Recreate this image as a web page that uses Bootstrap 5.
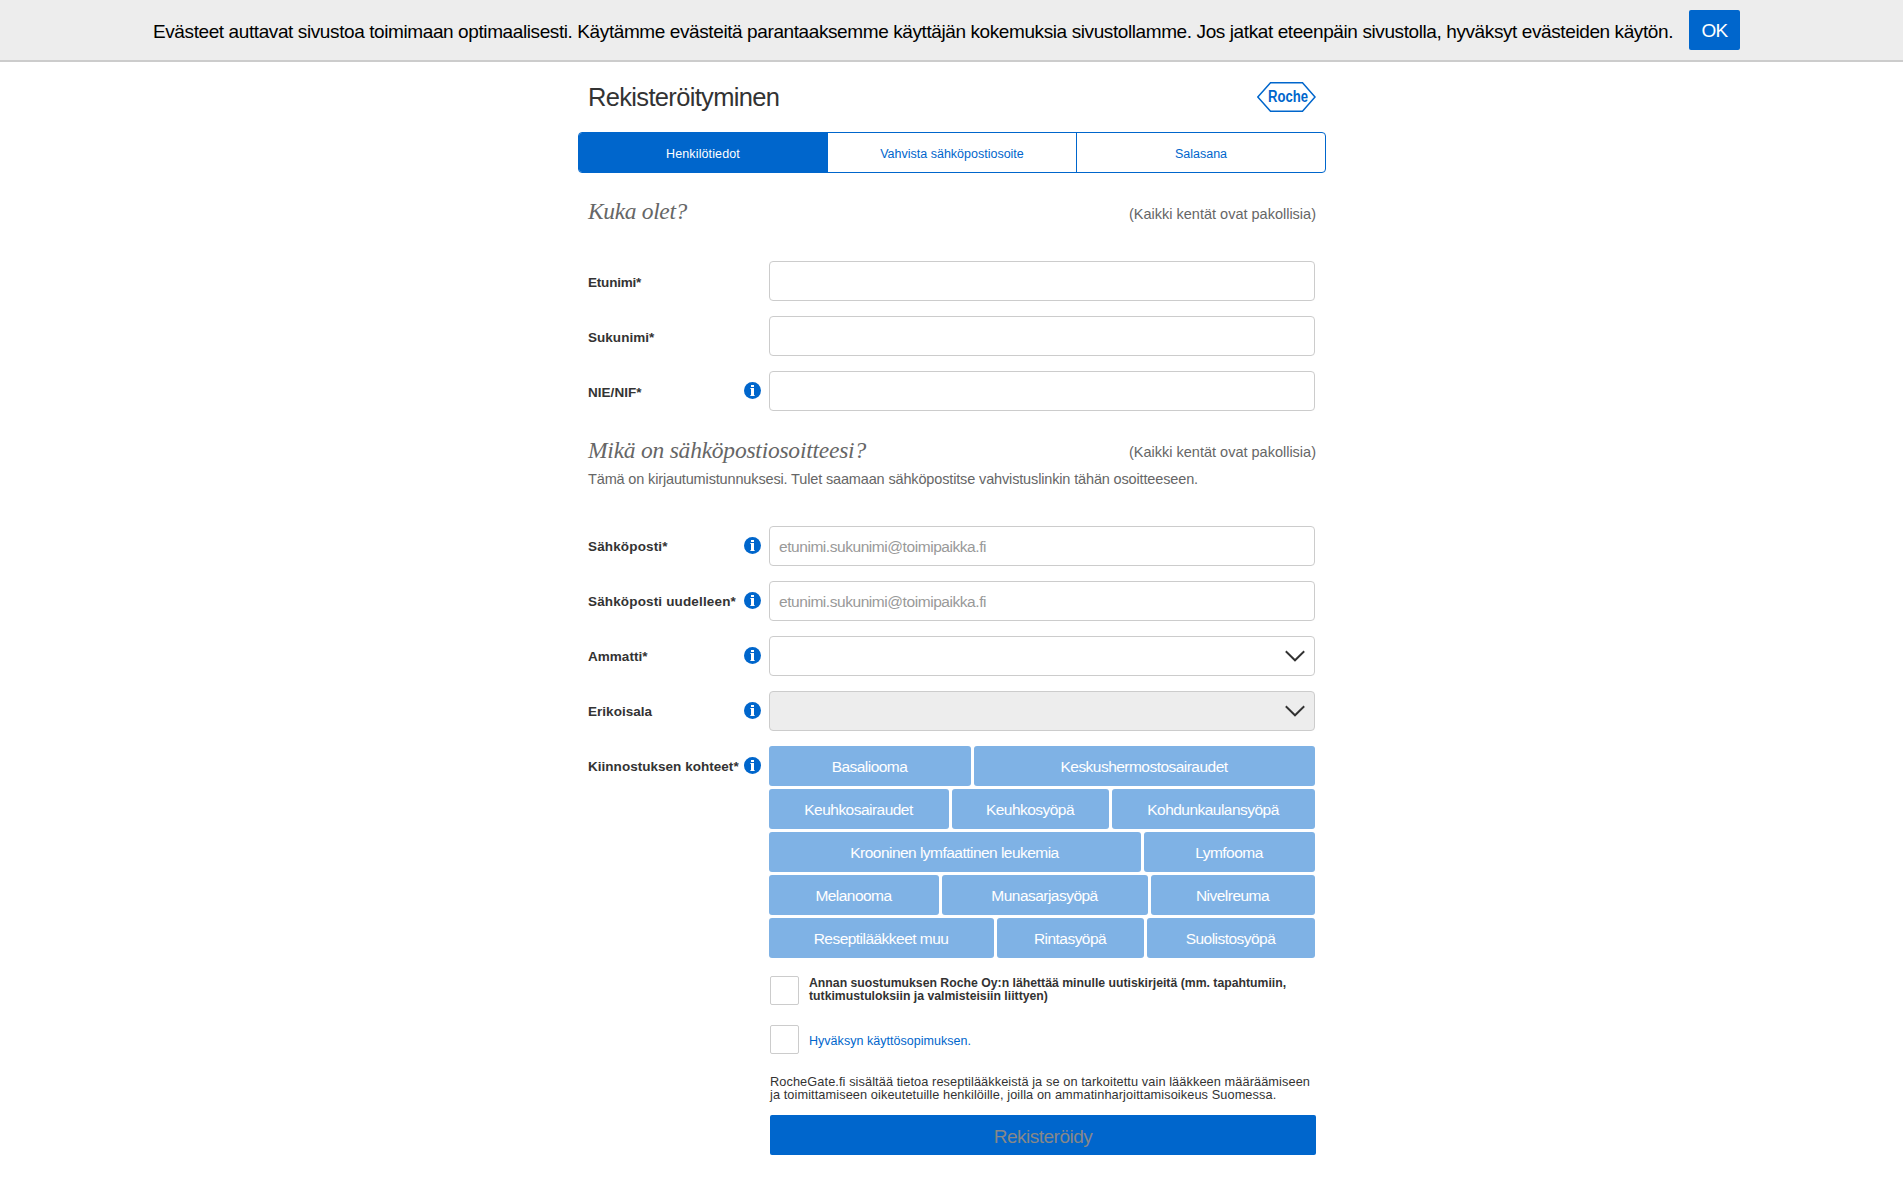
<!DOCTYPE html>
<html lang="fi">
<head>
<meta charset="utf-8">
<meta name="viewport" content="width=device-width, initial-scale=1">
<title>Rekisteröityminen</title>
<link href="https://cdn.jsdelivr.net/npm/bootstrap@5.3.0/dist/css/bootstrap.min.css" rel="stylesheet">
<style>
:root{--rb:#0066cc}
body{font-family:"Liberation Sans",Arial,sans-serif;color:#333;background:#fff;font-size:13px}
.cookie-bar{height:62px;background:#ededed;border-bottom:2px solid #ccc;color:#000;font-size:19px;line-height:26px;padding:10px 0 0 153px;letter-spacing:-.402px}
.cookie-text{padding:9px 16px 0 0}
.btn-roche{background:var(--rb);color:#fff;border:0;border-radius:2px;padding:0}
.ok-btn{width:51px;height:40px;font-size:19px;letter-spacing:-.7px;padding-top:3px}
.signup{width:749px;padding-left:1px}
.title-row{height:70px;padding:20px 10px 0}
.title-row h1{font-size:25.5px;font-weight:400;line-height:30px;margin:0;letter-spacing:-.67px}
.steps{height:41px;border:1px solid var(--rb);border-radius:4px;overflow:hidden;font-size:12.5px;color:var(--rb)}
.step-item{flex:1 1 0;border-left:1px solid var(--rb);padding-top:4px}
.step-item:first-child{border-left:0;background:var(--rb);color:#fff;letter-spacing:.12px}
.sect{padding:0 10px;color:#666}
.sect-who{margin:23px 0 35px}
.sect-mail{margin:24px 0 37px}
.sect h2{font-family:"Liberation Serif","Times New Roman",serif;font-style:italic;font-size:23.5px;font-weight:400;line-height:30px;margin:0;letter-spacing:-.23px}
.sect-who h2{letter-spacing:-.35px}
.req{font-size:14.5px;line-height:20px;padding-top:8px}
.sect-mail .req{padding-top:7px}
.hint{font-size:14.5px;line-height:20px;margin:4px 0 0;letter-spacing:-.148px}
.fields{gap:15px;padding-left:10px}
.lab{width:181px;padding:11px 8px 0 0;font-size:13.5px;line-height:20px;font-weight:700;white-space:nowrap}
.lab label{letter-spacing:.03px}
.lab .wide{letter-spacing:.15px}
.personal label{padding-top:1px}
.personal .tight{letter-spacing:-.2px}
.lab svg{width:17px;height:17px;flex:none}
.fields .form-control,.fields .form-select{width:546px;height:40px;border:1px solid #ccc;border-radius:4px;font-size:15.5px;padding:1px 9px 0;color:#333;letter-spacing:-.444px}
.fields .form-control::placeholder{color:#999;opacity:1}
.fields .form-select{background-image:url("data:image/svg+xml,%3Csvg xmlns='http://www.w3.org/2000/svg' viewBox='0 0 20 12'%3E%3Cpath d='M.8 1.3 10 10.3 19.2 1.3' fill='none' stroke='%23333' stroke-width='1.9'/%3E%3C/svg%3E");background-size:20px 12px;background-position:right 9px center}
.fields .form-select:disabled{background-color:#ededed}
.tags{width:546px;gap:3px}
.tag-row{gap:3px}
.tag{height:40px;background-color:#7fb2e5;border:0;border-radius:3px;color:#fff;font-size:15.5px;letter-spacing:-.53px;padding:2px 1px 0 0;white-space:nowrap}
.t-basal{width:202px}.t-keuhko{width:180px}.t-keuhkos{width:157px}.t-kroon{width:372px}
.t-melan{width:170px}.t-muna{width:206px}.t-resept{width:225px}.t-rinta{width:147px}
.after{width:738px;padding-left:192px}
.chk-row{margin-bottom:20px}
.fields-end{height:18px}
.form-check-input.chk{width:29px;height:29px;border:1px solid #ccc;border-radius:2px;margin:0;background:#fff;flex:none}
.chk-text{line-height:13px;padding-left:10px;white-space:nowrap}
.news{font-size:12.25px;font-weight:700;padding-top:1px}
.terms{font-size:12.5px;color:var(--rb);text-decoration:none;padding-top:10px;letter-spacing:.03px}
.legal{font-size:12.75px;line-height:13px;letter-spacing:.09px;margin:21px 0 14px;white-space:nowrap}
.submit{width:546px;height:40px;font-size:19px;color:#888;letter-spacing:-.5px;padding-top:4px}
</style>
</head>
<body>
<svg class="d-none"><symbol id="info" viewBox="0 0 17 17"><circle cx="8.5" cy="8.5" r="8.5" fill="#0066cc"/><path d="M7 3h3v2H7zM6.4 6H10v7H10.6v1H6.4v-1H7V7H6.4z" fill="#fff"/></symbol></svg>
<div class="cookie-bar d-flex align-items-start"><span class="cookie-text text-nowrap">Evästeet auttavat sivustoa toimimaan optimaalisesti. Käytämme evästeitä parantaaksemme käyttäjän kokemuksia sivustollamme. Jos jatkat eteenpäin sivustolla, hyväksyt evästeiden käytön.</span><button class="btn btn-roche ok-btn">OK</button></div>
<main class="signup mx-auto">
  <div class="title-row d-flex justify-content-between"><h1>Rekisteröityminen</h1>
    <svg width="59" height="30" viewBox="0 0 59 30"><path d="M13.5 .8H45.5L58 15 45.5 29.2H13.5L.8 15Z" fill="none" stroke="#0066cc" stroke-width="1.5"/><text transform="translate(11 20.2) scale(.77 1)" font-family="Liberation Sans" font-weight="700" font-size="17" fill="#0066cc">Roche</text></svg>
  </div>
  <div class="steps d-flex">
    <div class="step-item d-flex align-items-center justify-content-center">Henkilötiedot</div>
    <div class="step-item d-flex align-items-center justify-content-center">Vahvista sähköpostiosoite</div>
    <div class="step-item d-flex align-items-center justify-content-center">Salasana</div>
  </div>
  <form>
    <div class="sect sect-who d-flex justify-content-between"><h2>Kuka olet?</h2><span class="req">(Kaikki kentät ovat pakollisia)</span></div>
    <div class="fields personal d-flex flex-column">
      <div class="d-flex"><div class="lab d-flex"><label class="tight">Etunimi*</label></div><input class="form-control"></div>
      <div class="d-flex"><div class="lab d-flex"><label>Sukunimi*</label></div><input class="form-control"></div>
      <div class="d-flex"><div class="lab d-flex justify-content-between"><label>NIE/NIF*</label><svg><use href="#info"/></svg></div><input class="form-control"></div>
    </div>
    <div class="sect sect-mail">
      <div class="d-flex justify-content-between"><h2>Mikä on sähköpostiosoitteesi?</h2><span class="req">(Kaikki kentät ovat pakollisia)</span></div>
      <p class="hint">Tämä on kirjautumistunnuksesi. Tulet saamaan sähköpostitse vahvistuslinkin tähän osoitteeseen.</p>
    </div>
    <div class="fields d-flex flex-column">
      <div class="d-flex"><div class="lab d-flex justify-content-between"><label class="wide">Sähköposti*</label><svg><use href="#info"/></svg></div><input class="form-control" placeholder="etunimi.sukunimi@toimipaikka.fi"></div>
      <div class="d-flex"><div class="lab d-flex justify-content-between"><label class="wide">Sähköposti uudelleen*</label><svg><use href="#info"/></svg></div><input class="form-control" placeholder="etunimi.sukunimi@toimipaikka.fi"></div>
      <div class="d-flex"><div class="lab d-flex justify-content-between"><label>Ammatti*</label><svg><use href="#info"/></svg></div><select class="form-select"></select></div>
      <div class="d-flex"><div class="lab d-flex justify-content-between"><label>Erikoisala</label><svg><use href="#info"/></svg></div><select class="form-select" disabled></select></div>
      <div class="d-flex"><div class="lab d-flex justify-content-between"><label>Kiinnostuksen kohteet*</label><svg><use href="#info"/></svg></div>
        <div class="tags d-flex flex-column">
          <div class="tag-row d-flex"><button type="button" class="btn tag t-basal">Basaliooma</button><button type="button" class="btn tag flex-fill">Keskushermostosairaudet</button></div>
          <div class="tag-row d-flex"><button type="button" class="btn tag t-keuhko">Keuhkosairaudet</button><button type="button" class="btn tag t-keuhkos">Keuhkosyöpä</button><button type="button" class="btn tag flex-fill">Kohdunkaulansyöpä</button></div>
          <div class="tag-row d-flex"><button type="button" class="btn tag t-kroon">Krooninen lymfaattinen leukemia</button><button type="button" class="btn tag flex-fill">Lymfooma</button></div>
          <div class="tag-row d-flex"><button type="button" class="btn tag t-melan">Melanooma</button><button type="button" class="btn tag t-muna">Munasarjasyöpä</button><button type="button" class="btn tag flex-fill">Nivelreuma</button></div>
          <div class="tag-row d-flex"><button type="button" class="btn tag t-resept">Reseptilääkkeet muu</button><button type="button" class="btn tag t-rinta">Rintasyöpä</button><button type="button" class="btn tag flex-fill">Suolistosyöpä</button></div>
        </div>
      </div>
    </div>
    <div class="fields-end"></div>
    <div class="after">
      <div class="chk-row d-flex"><input type="checkbox" class="form-check-input chk"><label class="chk-text news">Annan suostumuksen Roche Oy:n lähettää minulle uutiskirjeitä (mm. tapahtumiin,<br>tutkimustuloksiin ja valmisteisiin liittyen)</label></div>
      <div class="d-flex"><input type="checkbox" class="form-check-input chk"><a class="chk-text terms" href="#">Hyväksyn käyttösopimuksen.</a></div>
      <p class="legal">RocheGate.fi sisältää tietoa reseptilääkkeistä ja se on tarkoitettu vain lääkkeen määräämiseen<br>ja toimittamiseen oikeutetuille henkilöille, joilla on ammatinharjoittamisoikeus Suomessa.</p>
      <button type="button" class="btn btn-roche submit">Rekisteröidy</button>
    </div>
  </form>
</main>
<script src="https://cdn.jsdelivr.net/npm/bootstrap@5.3.0/dist/js/bootstrap.bundle.min.js"></script>
</body>
</html>
